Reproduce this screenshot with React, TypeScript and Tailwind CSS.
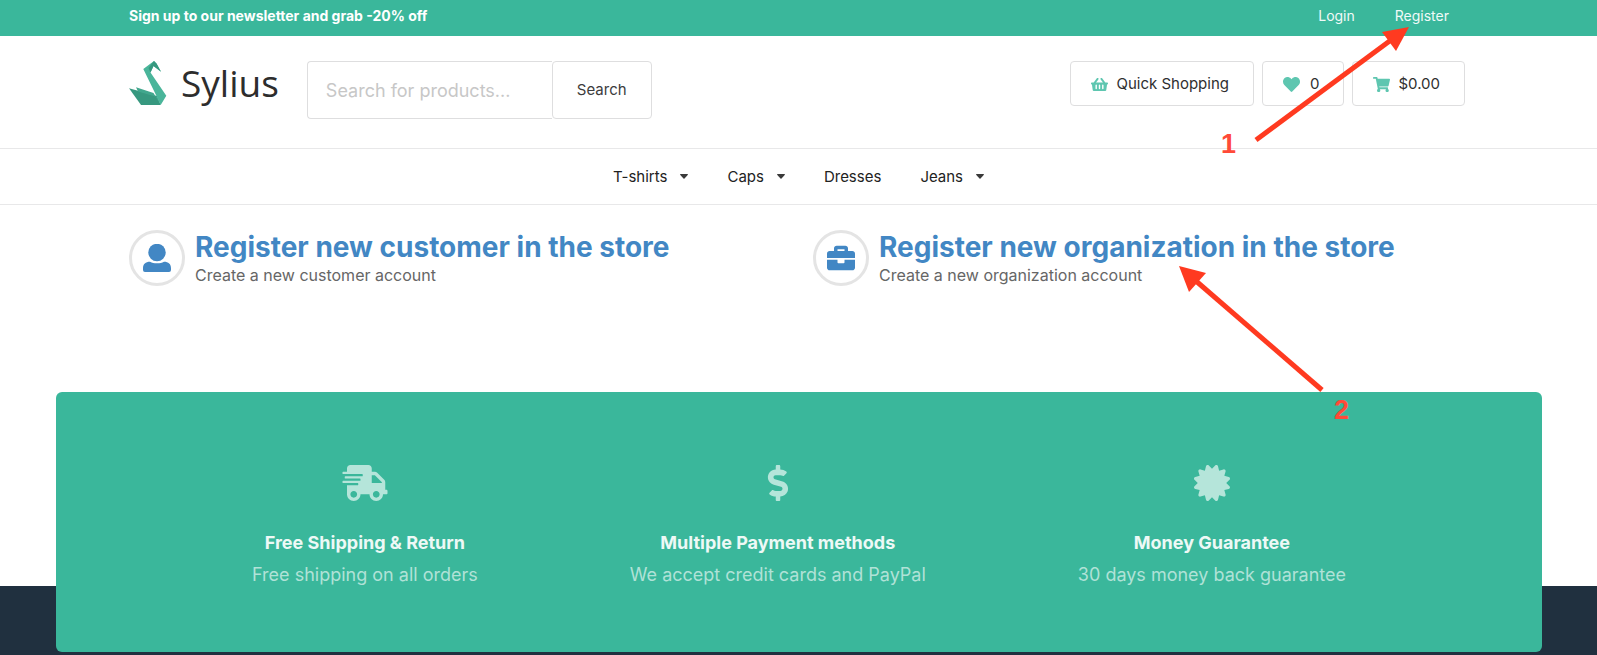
import React from "react";
import { FaShoppingBasket, FaHeart, FaShoppingCart, FaDollarSign, FaCertificate, FaBriefcase, FaShippingFast } from "react-icons/fa";

const buttonClass =
  "flex h-[45px] items-center rounded border border-[#dededf] bg-white pt-px text-[15px] text-[#2f2f2f]";

const categories = [
  { name: "T-shirts", menu: true },
  { name: "Caps", menu: true },
  { name: "Dresses", menu: false },
  { name: "Jeans", menu: true },
];

function Logo() {
  return (
    <a href="#" className="flex items-center gap-3.5" aria-label="Sylius">
      <svg width="38" height="44" viewBox="0 0 38 44" aria-hidden="true">
        <path d="M0 27.300 L12 44 L31.700 44 L28 35 Z" fill="#37987f" />
        <path d="M7 26.300 L24.500 32 L31.700 44 L28 36 L9 30.500 Z" fill="#41a78d" />
        <path d="M25 0 L14.300 8 L26.500 33 L31.700 44 L37.300 34.700 L21.500 11.500 L24.500 5 L32 10.700 L27.500 2.500 Z" fill="#4ab59a" />
        <path d="M25 0 L19.500 7 L21.500 11.500 L24.500 5 L32 10.700 L27.500 2.500 Z" fill="#37987f" />
      </svg>
      <span className="font-['Open_Sans'] text-[37px] leading-[44px] text-[#2d2d2d]">Sylius</span>
    </a>
  );
}

function Caret() {
  return (
    <svg className="mb-0.5" width="8" height="5" viewBox="0 0 8 5" fill="#3a3a3a" aria-hidden="true">
      <path d="M0.500 0 H7.500 Q8.200 0.300 7.700 1 L4.500 4.500 Q4 5 3.500 4.500 L0.300 1 Q-0.200 0.300 0.500 0 Z" />
    </svg>
  );
}

function UserIcon() {
  return (
    <svg width="28" height="28" viewBox="0 0 28 28" fill="currentColor" aria-hidden="true">
      <ellipse cx="14" cy="8.500" rx="8.700" ry="8.700" />
      <path d="M0 24.500 C0 20 2.500 17.800 7 17.800 C9 18.800 11 19.300 14 19.300 C17 19.300 19 18.800 21 17.800 C25.500 17.800 28 20 28 24.500 V26 Q28 28 26 28 H2 Q0 28 0 26 Z" />
    </svg>
  );
}

function RegisterOption({ icon, title, text }: { icon: React.ReactNode; title: string; text: string }) {
  return (
    <a href="#" className="flex flex-1 items-center gap-2.5">
      <span className="flex size-14 shrink-0 items-center justify-center rounded-full border-3 border-[#e4e4e4] text-[#4287c4]">
        {icon}
      </span>
      <span className="block pb-px">
        <span className="block text-[28px] leading-[35px] font-bold text-[#4287c4] [font-optical-sizing:none]">{title}</span>
        <span className="block text-base leading-5 text-[#666666]">{text}</span>
      </span>
    </a>
  );
}

function Benefit({ icon, title, text }: { icon: React.ReactNode; title: string; text: string }) {
  return (
    <div className="flex flex-col items-center">
      <div className="text-[#b5e5da]">{icon}</div>
      <h2 className="mt-[30px] text-lg leading-6 font-bold text-[#edf9f6]">{title}</h2>
      <p className="mt-2 text-lg leading-6 text-[#b0e2d7]">{text}</p>
    </div>
  );
}

function Annotations() {
  return (
    <div className="pointer-events-none absolute inset-0 font-['Liberation_Sans'] text-[27px] leading-7 font-bold text-[#ff4a38]">
      <svg className="absolute top-0 left-0" width="1597" height="655" fill="#ff3a20" stroke="#ff3a20" aria-hidden="true">
        <line x1="1256" y1="140" x2="1391" y2="40" strokeWidth="5" />
        <path d="M1409 27 L1382 32 L1396 51 Z" stroke="none" />
        <line x1="1322" y1="390" x2="1196" y2="281" strokeWidth="5" />
        <path d="M1179 266 L1206 273 L1189 292 Z" stroke="none" />
      </svg>
      <span className="absolute top-[130px] left-[1221px]">1</span>
      <span className="absolute top-[396px] left-[1334px]">2</span>
    </div>
  );
}

export default function App() {
  return (
    <div className="relative min-h-screen overflow-hidden bg-white font-['Inter',sans-serif]">
      <div className="flex h-9 items-center justify-between bg-[#3ab79b] pr-[148px] pb-1 pl-[129px] text-sm text-white">
        <strong className="font-bold">Sign up to our newsletter and grab -20% off</strong>
        <nav className="flex gap-10 text-[#f0faf8]">
          <a href="#">Login</a>
          <a href="#">Register</a>
        </nav>
      </div>

      <header className="flex h-[113px] items-start border-b border-[#e8e8e9] pt-[25px] pr-[132px] pl-[129px]">
        <Logo />
        <form className="ml-7 flex" onSubmit={(e) => e.preventDefault()}>
          <input
            type="text"
            aria-label="Search for products"
            placeholder="Search for products..."
            className="h-[58px] w-[245px] rounded-l border border-r-0 border-[#dededf] px-[18px] text-lg placeholder:text-[#c7c7c7]"
          />
          <button type="submit" className="h-[58px] rounded border border-[#dededf] px-6 pt-px text-[15px] text-[#3c3c3c]">
            Search
          </button>
        </form>
        <div className="ml-auto flex gap-2">
          <button type="button" className={`${buttonClass} gap-2 pr-6 pl-5`}>
            <FaShoppingBasket size={17} color="#5ec6b0" />
            Quick Shopping
          </button>
          <button type="button" className={`${buttonClass} gap-2.5 pr-6 pl-5`}>
            <FaHeart size={17} color="#5ec6b0" />0
          </button>
          <button type="button" className={`${buttonClass} gap-2 pr-6 pl-5`}>
            <FaShoppingCart size={17} color="#5ec6b0" />
            $0.00
          </button>
        </div>
      </header>

      <nav className="flex h-14 items-center justify-center gap-[39px] border-b border-[#e8e8e9] pt-0.5 text-[15px] text-[#222222]">
        {categories.map((c) => (
          <a key={c.name} href="#" className="flex items-center gap-[13px]">
            {c.name}
            {c.menu && <Caret />}
          </a>
        ))}
      </nav>

      <main className="flex pt-[25px] pr-[100px] pl-[129px]">
        <RegisterOption icon={<UserIcon />} title="Register new customer in the store" text="Create a new customer account" />
        <RegisterOption icon={<FaBriefcase size={28} />} title="Register new organization in the store" text="Create a new organization account" />
      </main>

      <footer className="mt-[106px] bg-[linear-gradient(to_bottom,#ffffff_194px,#20303f_194px)] pr-[55px] pb-[3px] pl-14">
        <div className="flex h-[260px] justify-evenly rounded-md bg-[#3ab79b] px-11 pt-[73px]">
          <Benefit icon={<FaShippingFast size={46} className="h-9" />} title="Free Shipping & Return" text="Free shipping on all orders" />
          <Benefit icon={<FaDollarSign size={36} />} title="Multiple Payment methods" text="We accept credit cards and PayPal" />
          <Benefit icon={<FaCertificate size={36} />} title="Money Guarantee" text="30 days money back guarantee" />
        </div>
      </footer>

      <Annotations />
    </div>
  );
}
